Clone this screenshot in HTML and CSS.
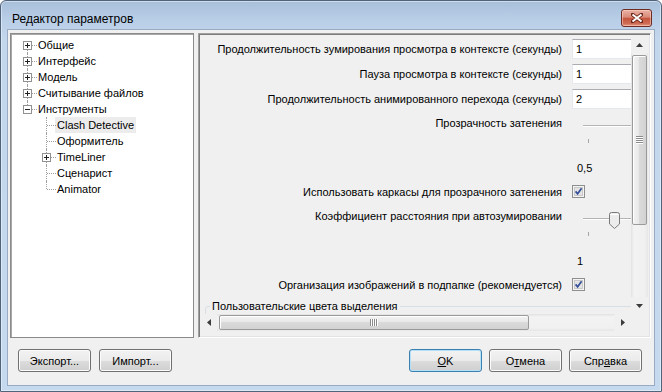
FILE: index.html
```html
<!DOCTYPE html>
<html lang="ru">
<head>
    <meta charset="UTF-8">
    <title>Редактор параметров</title>
    <link rel="stylesheet" href="styles.css">
</head>
<body>
    <div class="window">
        <div class="titlebar">
            <span class="title">Редактор параметров</span>
            <button class="close">
                <svg width="12" height="10" viewBox="0 0 12 10"><path d="M1.5 1.5 L10.5 8.5 M10.5 1.5 L1.5 8.5" stroke="#6a2418" stroke-width="3.6" stroke-linecap="round"/><path d="M1.5 1.5 L10.5 8.5 M10.5 1.5 L1.5 8.5" stroke="#fff" stroke-width="2"/></svg>
            </button>
        </div>

        <div class="client">
            <div class="main">
                <div class="tree">
                    <div class="node">
                        <span class="branch first"><svg width="9" height="9"><rect x=".5" y=".5" width="8" height="8" fill="#fff" stroke="#919191"/><path d="M2 4.5h5M4.5 2v5" stroke="#222"/></svg></span>
                        <span class="text">Общие</span>
                    </div>
                    <div class="node">
                        <span class="branch"><svg width="9" height="9"><rect x=".5" y=".5" width="8" height="8" fill="#fff" stroke="#919191"/><path d="M2 4.5h5M4.5 2v5" stroke="#222"/></svg></span>
                        <span class="text">Интерфейс</span>
                    </div>
                    <div class="node">
                        <span class="branch"><svg width="9" height="9"><rect x=".5" y=".5" width="8" height="8" fill="#fff" stroke="#919191"/><path d="M2 4.5h5M4.5 2v5" stroke="#222"/></svg></span>
                        <span class="text">Модель</span>
                    </div>
                    <div class="node">
                        <span class="branch"><svg width="9" height="9"><rect x=".5" y=".5" width="8" height="8" fill="#fff" stroke="#919191"/><path d="M2 4.5h5M4.5 2v5" stroke="#222"/></svg></span>
                        <span class="text">Считывание файлов</span>
                    </div>
                    <div class="node">
                        <span class="branch last"><svg width="9" height="9"><rect x=".5" y=".5" width="8" height="8" fill="#fff" stroke="#919191"/><path d="M2 4.5h5" stroke="#222"/></svg></span>
                        <span class="text">Инструменты</span>
                    </div>
                    <div class="node child">
                        <span class="branch leaf"></span>
                        <span class="text selected">Clash Detective</span>
                    </div>
                    <div class="node child">
                        <span class="branch leaf"></span>
                        <span class="text">Оформитель</span>
                    </div>
                    <div class="node child">
                        <span class="branch"><svg width="9" height="9"><rect x=".5" y=".5" width="8" height="8" fill="#fff" stroke="#919191"/><path d="M2 4.5h5M4.5 2v5" stroke="#222"/></svg></span>
                        <span class="text">TimeLiner</span>
                    </div>
                    <div class="node child">
                        <span class="branch leaf"></span>
                        <span class="text">Сценарист</span>
                    </div>
                    <div class="node child">
                        <span class="branch leaf last"></span>
                        <span class="text">Animator</span>
                    </div>
                </div>

                <div class="page">
                    <div class="view">
                        <div class="props">
                            <div class="row">
                                <span class="label">Продолжительность зумирования просмотра в контексте (секунды)</span>
                                <span class="field">1</span>
                            </div>
                            <div class="row">
                                <span class="label">Пауза просмотра в контексте (секунды)</span>
                                <span class="field">1</span>
                            </div>
                            <div class="row">
                                <span class="label">Продолжительность анимированного перехода (секунды)</span>
                                <span class="field">2</span>
                            </div>
                            <div class="slider">
                                <span class="label">Прозрачность затенения</span>
                                <div class="scale">
                                    <div class="track"></div>
                                    <div class="tick"></div>
                                    <div class="value">0,5</div>
                                </div>
                            </div>
                            <div class="row">
                                <span class="label">Использовать каркасы для прозрачного затенения</span>
                                <svg class="check" width="13" height="13"><rect x=".5" y=".5" width="12" height="12" fill="#f4f4f4" stroke="#8e8f8f"/><rect x="2.5" y="2.5" width="8" height="8" fill="#e4e4e4" stroke="#c8c8c8"/><path d="M3.6 6.4 L5.6 8.8 L9.6 3.2" stroke="#35509a" stroke-width="1.7" fill="none"/></svg>
                            </div>
                            <div class="slider">
                                <span class="label">Коэффициент расстояния при автозумировании</span>
                                <div class="scale">
                                    <div class="track">
                                        <svg class="thumb" width="11" height="17"><path d="M.5 2.5 Q.5 .5 2.5 .5 H8.5 Q10.5 .5 10.5 2.5 V12 L5.5 16.5 L.5 12 Z" fill="#ececec" stroke="#7a7a7a"/><path d="M1.5 2.5 H9.5" stroke="#fff"/></svg>
                                    </div>
                                    <div class="tick"></div>
                                    <div class="value">1</div>
                                </div>
                            </div>
                            <div class="row">
                                <span class="label">Организация изображений в подпапке (рекомендуется)</span>
                                <svg class="check" width="13" height="13"><rect x=".5" y=".5" width="12" height="12" fill="#f4f4f4" stroke="#8e8f8f"/><rect x="2.5" y="2.5" width="8" height="8" fill="#e4e4e4" stroke="#c8c8c8"/><path d="M3.6 6.4 L5.6 8.8 L9.6 3.2" stroke="#35509a" stroke-width="1.7" fill="none"/></svg>
                            </div>
                            <fieldset class="group">
                                <legend>Пользовательские цвета выделения</legend>
                            </fieldset>
                        </div>

                        <div class="vscroll">
                            <div class="arrow"><svg width="7" height="4"><path d="M3.5 0 L7 4 H0 Z" fill="#3c3c3c"/></svg></div>
                            <div class="vtrack">
                                <div class="vthumb">
                                    <svg width="7" height="8"><path d="M0 .5h7M0 2.5h7M0 4.5h7M0 6.5h7" stroke="#8a8a8a"/><path d="M0 1.5h7M0 3.5h7M0 5.5h7M0 7.5h7" stroke="#fff"/></svg>
                                </div>
                            </div>
                            <div class="arrow"><svg width="7" height="4"><path d="M0 0 H7 L3.5 4 Z" fill="#3c3c3c"/></svg></div>
                        </div>
                    </div>

                    <div class="hbar">
                        <div class="hscroll">
                            <div class="arrow"><svg width="4" height="7"><path d="M4 0 V7 L0 3.5 Z" fill="#3c3c3c"/></svg></div>
                            <div class="htrack">
                                <div class="hthumb">
                                    <svg width="8" height="7"><path d="M.5 0v7M2.5 0v7M4.5 0v7M6.5 0v7" stroke="#8a8a8a"/><path d="M1.5 0v7M3.5 0v7M5.5 0v7M7.5 0v7" stroke="#fff"/></svg>
                                </div>
                            </div>
                            <div class="arrow"><svg width="4" height="7"><path d="M0 0 V7 L4 3.5 Z" fill="#3c3c3c"/></svg></div>
                        </div>
                        <div class="corner"></div>
                    </div>
                </div>
            </div>

            <div class="buttons">
                <div class="group-left">
                    <button class="btn">Экспорт...</button>
                    <button class="btn">Импорт...</button>
                </div>
                <div class="group-right">
                    <button class="btn default"><u>O</u>K</button>
                    <button class="btn">О<u>т</u>мена</button>
                    <button class="btn">Спр<u>а</u>вка</button>
                </div>
            </div>
        </div>
    </div>
</body>
</html>
```

FILE: styles.css
```css
body {
    margin: 0;
    font-family: "Liberation Sans", Arial, sans-serif;
    font-size: 11px;
    color: #000000;
    background-color: #ffffff;
}

.window {
    width: 662px;
    height: 392px;
    box-sizing: border-box;
    display: flex;
    flex-direction: column;
    padding: 0 6px 5px;
    border: 1px solid #4f637b;
    border-radius: 6px 6px 0 0;
    background: linear-gradient(to bottom, #a8bfda, #b8cee7 18px, #c2d6ec 36px, #c5d9ef);
    box-shadow: inset 0 0 0 1px rgba(255, 255, 255, 0.45);
}

.titlebar {
    height: 28px;
    flex-shrink: 0;
    display: flex;
    justify-content: space-between;
    align-items: flex-start;
    padding: 0 3px 0 5px;
}

.title {
    font-size: 12px;
    line-height: 14px;
    margin-top: 11px;
}

.close {
    width: 31px;
    height: 18px;
    margin-top: 8px;
    padding: 0;
    display: flex;
    align-items: center;
    justify-content: center;
    border: 1px solid #6e2b22;
    border-radius: 3px;
    background: linear-gradient(to bottom, #eab1a4, #d98a78 45%, #c5553d 52%, #cf6c55 85%, #e49a82);
    box-shadow: inset 0 0 0 1px rgba(255, 220, 210, 0.5);
}

.client {
    flex: 1;
    display: flex;
    flex-direction: column;
    padding: 3px 3px 0 2px;
    border: 1px solid #98abc2;
    background-color: #f0f0f0;
}

.main {
    display: flex;
    gap: 4px;
    height: 305px;
}

/* tree */

.tree {
    width: 184px;
    flex-shrink: 0;
    box-sizing: border-box;
    padding: 3px 0 0 8px;
    border: 1px solid #8a8a8a;
    box-shadow: inset 1px 1px 0 #a8a8a8;
    background-color: #ffffff;
}

.node {
    display: flex;
    height: 16px;
}

.node.child {
    padding-left: 19px;
}

.branch {
    position: relative;
    width: 17px;
    height: 16px;
    flex-shrink: 0;
    display: flex;
    align-items: center;
    justify-content: center;
}

.branch svg {
    position: relative;
    z-index: 1;
}

.branch::before {
    content: "";
    position: absolute;
    left: 8px;
    top: 0;
    height: 16px;
    border-left: 1px dotted #a0a0a0;
}

.branch.first::before {
    top: 8px;
    height: 8px;
}

.branch.last::before {
    height: 8px;
}

.branch::after {
    content: "";
    position: absolute;
    left: 13px;
    top: 8px;
    width: 5px;
    border-top: 1px dotted #a0a0a0;
}

.branch.leaf::after {
    left: 9px;
    width: 9px;
}

.text {
    padding: 0 2px;
    line-height: 16px;
    white-space: nowrap;
}

.text.selected {
    background-color: #ececec;
}

/* property page */

.page {
    flex: 1;
    min-width: 0;
    box-sizing: border-box;
    display: flex;
    flex-direction: column;
    padding: 2px 2px 4px 1px;
    border: 1px solid #a0a0a0;
    border-right-color: #ffffff;
    border-bottom-color: #ffffff;
    box-shadow: inset 1px 1px 0 #7c7c7c, inset -1px -1px 0 #e3e3e3;
}

.view {
    display: flex;
    height: 278px;
}

.props {
    flex: 1;
    min-width: 0;
    overflow: hidden;
}

.row {
    display: flex;
    align-items: center;
    height: 25px;
}

.label {
    width: 362px;
    flex-shrink: 0;
    margin-right: 10px;
    text-align: right;
    white-space: nowrap;
}

.field {
    width: 80px;
    height: 20px;
    flex-shrink: 0;
    box-sizing: border-box;
    padding-left: 3px;
    line-height: 18px;
    border: 1px solid #e3e9ef;
    border-top-color: #abadb3;
    background-color: #ffffff;
}

.slider {
    display: flex;
    align-items: flex-start;
    height: 68px;
}

.slider .label {
    padding-top: 6px;
    line-height: 13px;
}

.scale {
    width: 80px;
    flex-shrink: 0;
}

.track {
    position: relative;
    margin: 14px 0 0 11px;
    height: 0;
    border-top: 1px solid #b4b4b4;
    border-bottom: 1px solid #ffffff;
}

.thumb {
    position: absolute;
    left: 26px;
    top: -7px;
}

.tick {
    width: 1px;
    height: 4px;
    margin: 12px 0 0 16px;
    background-color: #a6a6a6;
}

.value {
    margin: 19px 0 0 5px;
    line-height: 13px;
}

.check {
    display: block;
    flex-shrink: 0;
}

.group {
    height: 40px;
    margin: 3px -60px 0 5px;
    padding: 0 0 0 4px;
    border: 1px solid #d5dfe5;
    border-radius: 3px;
}

.group legend {
    padding: 0 2px;
    line-height: 13px;
}

/* scrollbars */

.vscroll {
    width: 17px;
    flex-shrink: 0;
    display: flex;
    flex-direction: column;
}

.arrow {
    width: 17px;
    height: 17px;
    flex-shrink: 0;
    display: flex;
    align-items: center;
    justify-content: center;
    background-color: #f0f0f0;
}

.vtrack {
    flex: 1;
    padding-top: 2px;
    background: linear-gradient(to right, #e2e2e2, #f3f3f3 3px, #f0f0f0 14px, #e6e6e6);
}

.vthumb {
    height: 170px;
    margin: 0 1px;
    box-sizing: border-box;
    display: flex;
    align-items: center;
    justify-content: center;
    border: 1px solid #9a9a9a;
    border-radius: 2px;
    background: linear-gradient(to right, #f3f3f3, #e8e8e8 45%, #dadada 50%, #d2d2d2);
    box-shadow: inset 1px 1px 0 #ffffff;
}

.hbar {
    display: flex;
    height: 17px;
}

.hscroll {
    flex: 1;
    min-width: 0;
    display: flex;
}

.htrack {
    flex: 1;
    padding-left: 2px;
    background: linear-gradient(to bottom, #e2e2e2, #f3f3f3 3px, #f0f0f0 14px, #e6e6e6);
}

.hthumb {
    width: 310px;
    height: 15px;
    margin-top: 1px;
    box-sizing: border-box;
    display: flex;
    align-items: center;
    justify-content: center;
    border: 1px solid #9a9a9a;
    border-radius: 2px;
    background: linear-gradient(to bottom, #f3f3f3, #e8e8e8 45%, #dadada 50%, #d2d2d2);
    box-shadow: inset 1px 1px 0 #ffffff;
}

.corner {
    width: 17px;
    flex-shrink: 0;
    background-color: #f0f0f0;
}

/* buttons */

.buttons {
    display: flex;
    justify-content: space-between;
    margin-top: 11px;
    padding: 0 9px 0 8px;
}

.group-left,
.group-right {
    display: flex;
    gap: 8px;
}

.group-right {
    gap: 7px;
}

.btn {
    width: 73px;
    height: 23px;
    padding: 0;
    font-family: "Liberation Sans", Arial, sans-serif;
    font-size: 11px;
    color: #000000;
    border: 1px solid #707070;
    border-radius: 3px;
    background: linear-gradient(to bottom, #f2f2f2, #ebebeb 50%, #dddddd 50%, #cfcfcf);
    box-shadow: inset 0 0 0 1px #fcfcfc;
}

.btn.default {
    border-color: #3c7fb1;
    box-shadow: inset 0 0 0 1px #b5e1f8;
}
```
